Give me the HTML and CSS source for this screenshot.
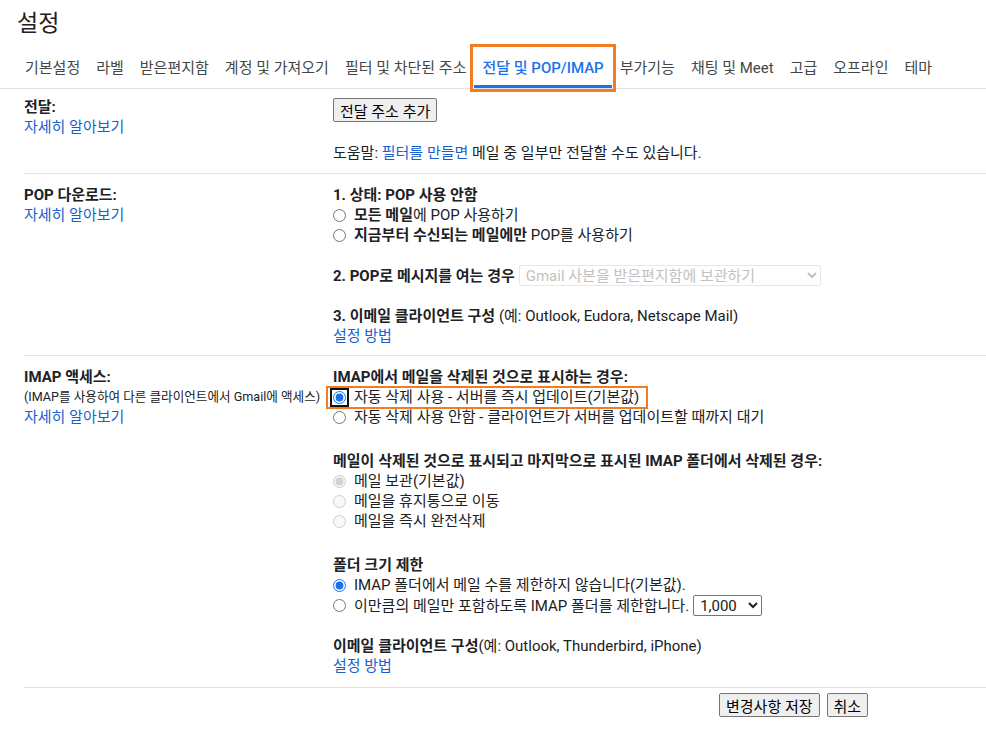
FILE: index.html
```html
<!DOCTYPE html>
<html lang="ko">
<head>
    <meta charset="UTF-8">
    <meta name="viewport" content="width=device-width, initial-scale=1.0">
    <title>설정 - 전달 및 POP/IMAP</title>
    <link rel="stylesheet" href="styles.css">
</head>
<body>
    <div class="settings">
        <h1 class="title">설정</h1>

        <!-- Settings tabs -->
        <nav class="tabs">
            <a class="tab" href="#">기본설정</a>
            <a class="tab" href="#">라벨</a>
            <a class="tab" href="#">받은편지함</a>
            <a class="tab" href="#">계정 및 가져오기</a>
            <a class="tab" href="#">필터 및 차단된 주소</a>
            <a class="tab active marked" href="#">전달 및 POP/IMAP</a>
            <a class="tab" href="#">부가기능</a>
            <a class="tab" href="#">채팅 및 Meet</a>
            <a class="tab" href="#">고급</a>
            <a class="tab" href="#">오프라인</a>
            <a class="tab" href="#">테마</a>
        </nav>

        <div class="panel">
            <!-- Forwarding -->
            <section class="row row-forward">
                <div class="label-col">
                    <div class="label">전달:</div>
                    <a class="link" href="#">자세히 알아보기</a>
                </div>
                <div class="field-col">
                    <div class="btn-wrap"><button class="btn" type="button">전달 주소 추가</button></div>
                    <p class="help">도움말: <a class="link" href="#">필터를 만들면</a> 메일 중 일부만 전달할 수도 있습니다.</p>
                </div>
            </section>

            <!-- POP -->
            <section class="row row-pop">
                <div class="label-col">
                    <div class="label">POP 다운로드:</div>
                    <a class="link" href="#">자세히 알아보기</a>
                </div>
                <div class="field-col">
                    <div class="group">
                        <div class="head">1. 상태: POP 사용 안함</div>
                        <label class="opt"><input type="radio" name="pop"><span><b>모든 메일</b>에 POP 사용하기</span></label>
                        <label class="opt"><input type="radio" name="pop"><span><b>지금부터 수신되는 메일에만</b> POP를 사용하기</span></label>
                    </div>
                    <div class="group">
                        <div class="opt">
                            <b class="inline-head">2. POP로 메시지를 여는 경우</b>
                            <select class="select select-wide" disabled>
                                <option>Gmail 사본을 받은편지함에 보관하기</option>
                            </select>
                        </div>
                    </div>
                    <div class="group">
                        <div class="line"><b>3. 이메일 클라이언트 구성</b> (예: Outlook, Eudora, Netscape Mail)</div>
                        <a class="link" href="#">설정 방법</a>
                    </div>
                </div>
            </section>

            <!-- IMAP -->
            <section class="row row-imap">
                <div class="label-col">
                    <div class="label">IMAP 액세스:</div>
                    <div class="note">(IMAP를 사용하여 다른 클라이언트에서 Gmail에 액세스)</div>
                    <a class="link" href="#">자세히 알아보기</a>
                </div>
                <div class="field-col">
                    <div class="group">
                        <div class="head">IMAP에서 메일을 삭제된 것으로 표시하는 경우:</div>
                        <label class="opt marked"><input class="focused" type="radio" name="expunge" checked><span>자동 삭제 사용 - 서버를 즉시 업데이트(기본값)</span></label>
                        <label class="opt"><input type="radio" name="expunge"><span>자동 삭제 사용 안함 - 클라이언트가 서버를 업데이트할 때까지 대기</span></label>
                    </div>
                    <div class="group gap-lg">
                        <div class="head">메일이 삭제된 것으로 표시되고 마지막으로 표시된 IMAP 폴더에서 삭제된 경우:</div>
                        <label class="opt disabled"><input type="radio" name="deleted" checked disabled><span>메일 보관(기본값)</span></label>
                        <label class="opt disabled"><input type="radio" name="deleted" disabled><span>메일을 휴지통으로 이동</span></label>
                        <label class="opt disabled"><input type="radio" name="deleted" disabled><span>메일을 즉시 완전삭제</span></label>
                    </div>
                    <div class="group gap-lg">
                        <div class="head">폴더 크기 제한</div>
                        <label class="opt"><input type="radio" name="limit" checked><span>IMAP 폴더에서 메일 수를 제한하지 않습니다(기본값).</span></label>
                        <label class="opt"><input type="radio" name="limit"><span>이만큼의 메일만 포함하도록 IMAP 폴더를 제한합니다.</span>
                            <select class="select select-small">
                                <option>1,000</option>
                                <option>2,000</option>
                                <option>5,000</option>
                                <option>10,000</option>
                            </select>
                        </label>
                    </div>
                    <div class="group">
                        <div class="line"><b>이메일 클라이언트 구성</b>(예: Outlook, Thunderbird, iPhone)</div>
                        <a class="link" href="#">설정 방법</a>
                    </div>
                </div>
            </section>

            <div class="actions">
                <button class="btn" type="button">변경사항 저장</button>
                <button class="btn" type="button">취소</button>
            </div>
        </div>
    </div>
</body>
</html>
```

FILE: styles.css
```css
/* General */
body {
    margin: 0;
    background: #fff;
    color: #202124;
    font-family: Roboto, "Noto Sans CJK KR", Arial, sans-serif;
    font-size: 15px;
    line-height: 20px;
}

a {
    text-decoration: none;
}

b {
    font-weight: 700;
}

.title {
    margin: 0;
    padding: 10px 0 10px 17px;
    font-size: 23px;
    font-weight: 400;
    line-height: 28px;
    color: #202124;
}

/* Tabs */
.tabs {
    display: flex;
    padding-left: 17px;
    border-bottom: 1px solid #e3e3e3;
}

.tab {
    position: relative;
    padding: 10px 8px 7px;
    border-bottom: 3px solid transparent;
    color: #444746;
    white-space: nowrap;
}

.tab.active {
    color: #1a73e8;
    font-weight: 500;
    border-bottom-color: #1a73e8;
}

/* Orange highlight boxes drawn over items */
.marked {
    position: relative;
}

.marked::after {
    content: "";
    position: absolute;
    pointer-events: none;
    border: 2px solid #f47c20;
}

.tab.marked::after {
    top: -4px;
    left: -4px;
    right: -4px;
    bottom: -7px;
    border-width: 3px;
}

.opt.marked::after {
    top: -1px;
    left: -7px;
    right: -9px;
    bottom: -2px;
}

/* Settings rows */
.panel {
    padding-left: 24px;
}

.row {
    display: grid;
    grid-template-columns: 309px 1fr;
    border-bottom: 1px solid #e3e3e3;
}

.row-forward {
    padding: 8px 0 10px;
}

.row-pop {
    padding: 11px 0 9px;
}

.row-imap {
    padding: 11px 0 11px;
}

.label-col {
    display: flex;
    flex-direction: column;
    align-items: flex-start;
}

.label {
    font-weight: 700;
}

.note {
    font-size: 12.6px;
    white-space: nowrap;
}

.link {
    color: #1a5fd0;
}

.field-col {
    display: flex;
    flex-direction: column;
    align-items: flex-start;
}

.btn-wrap {
    padding-top: 1px;
    height: 25px;
}

.btn {
    height: 24px;
    padding: 1px 6px;
    font-family: inherit;
    font-size: 15px;
    color: #000;
    background: #efefef;
    border: 1px solid #767676;
    border-radius: 2px;
}

.help {
    margin: 20px 0 0;
}

.group {
    display: flex;
    flex-direction: column;
    align-items: flex-start;
}

.group + .group {
    margin-top: 20px;
}

.group.gap-lg {
    margin-top: 24px;
}

.head,
.inline-head {
    font-weight: 700;
}

/* Radio options */
.opt {
    display: inline-flex;
    align-items: center;
    min-height: 20px;
    white-space: nowrap;
}

.opt input[type="radio"] {
    width: 13px;
    height: 13px;
    margin: 0 8px 0 0;
    accent-color: #1a73e8;
}

.opt input.focused {
    outline: 2px solid #111;
    outline-offset: 1px;
    border-radius: 50%;
}

.opt.disabled {
    color: #202124;
}

/* Drop-downs */
.select {
    height: 21px;
    padding: 0 2px;
    font-family: inherit;
    font-size: 15px;
    border-radius: 2px;
}

.select-wide {
    width: 302px;
    margin-left: 4px;
    color: #a8a8a8;
    background: #fff;
    border: 1px solid #dedede;
}

.select-small {
    width: 69px;
    margin-left: 4px;
    color: #202124;
    background: #fff;
    border: 1px solid #767676;
}

/* Save / cancel */
.actions {
    display: flex;
    gap: 7px;
    padding: 5px 0 0 695px;
}
```
